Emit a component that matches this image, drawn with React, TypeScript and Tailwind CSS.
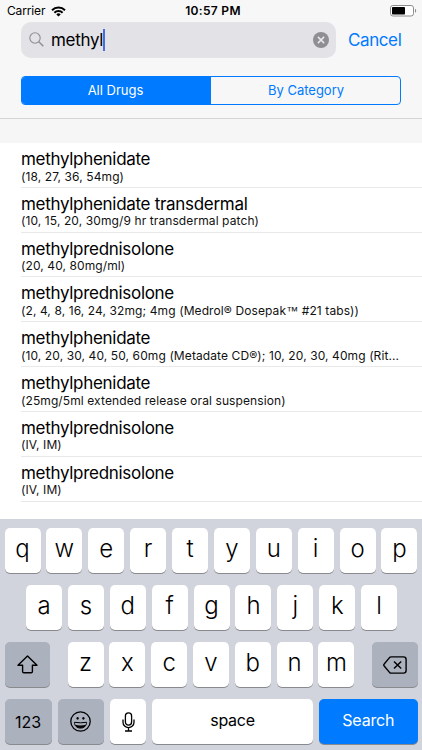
import React, { useState } from 'react';

interface Drug {
  id: number;
  name: string;
  detail: string;
}

const DRUGS: Drug[] = [
  { id: 1, name: 'methylphenidate', detail: '(18, 27, 36, 54mg)' },
  { id: 2, name: 'methylphenidate transdermal', detail: '(10, 15, 20, 30mg/9 hr transdermal patch)' },
  { id: 3, name: 'methylprednisolone', detail: '(20, 40, 80mg/ml)' },
  { id: 4, name: 'methylprednisolone', detail: '(2, 4, 8, 16, 24, 32mg; 4mg (Medrol® Dosepak™ #21 tabs))' },
  { id: 5, name: 'methylphenidate', detail: '(10, 20, 30, 40, 50, 60mg (Metadate CD®); 10, 20, 30, 40mg (Rit...' },
  { id: 6, name: 'methylphenidate', detail: '(25mg/5ml extended release oral suspension)' },
  { id: 7, name: 'methylprednisolone', detail: '(IV, IM)' },
  { id: 8, name: 'methylprednisolone', detail: '(IV, IM)' },
];

const TABS = ['All Drugs', 'By Category'];

const StatusBar: React.FC = () => (
  <div className="grid h-[22px] grid-cols-3 items-center pl-[7px] pr-[5px] text-[12px] text-black">
    <div className="flex items-center gap-[6px]">
      <span className="tracking-[-0.15px]">Carrier</span>
      <svg width="15" height="11" viewBox="0 0 15 11" fill="none" stroke="#000" strokeWidth="2">
        <path d="M1 4.2a9.2 9.2 0 0 1 13 0" />
        <path d="M3.4 6.8a5.8 5.8 0 0 1 8.2 0" />
        <path d="M7.5 10.6 5.3 8.4a3.1 3.1 0 0 1 4.4 0z" fill="#000" stroke="none" />
      </svg>
    </div>
    <span className="whitespace-nowrap pl-[2px] text-center font-semibold tracking-[0.3px]">10:57 PM</span>
    <svg className="justify-self-end" width="27" height="12" viewBox="0 0 27 12">
      <rect x="0.5" y="0.5" width="23" height="10.5" rx="2.4" fill="#fff" stroke="#8c8c8c" />
      <rect x="2" y="2" width="13" height="7.5" rx="0.8" fill="#000" />
      <path d="M25 3.8c1.6.5 1.6 3.4 0 3.9z" fill="#8c8c8c" />
    </svg>
  </div>
);

const SearchBar: React.FC = () => (
  <div className="flex h-9 items-center pl-[21px]">
    <div className="flex h-9 w-[315px] items-center rounded-[10px] bg-[#e2e2e7] pl-[8px] pr-[7px]">
      <svg className="mb-px" width="15" height="15" viewBox="0 0 15 15" fill="none" stroke="#8e8e93" strokeWidth="1.1">
        <circle cx="6" cy="6" r="5.2" />
        <path d="M9.8 9.8 14.3 14.3" strokeWidth="1.4" />
      </svg>
      <span className="ml-[7px] pt-[2px] text-[17px] tracking-[-0.3px] text-black">methyl</span>
      <span className="h-[22px] w-[2px] bg-[#4a6ae0]" />
      <svg className="ml-auto" width="16" height="16" viewBox="0 0 16 16">
        <circle cx="8" cy="8" r="8" fill="#8e8e93" />
        <path d="m4.9 4.9 6.2 6.2M11.1 4.9l-6.2 6.2" stroke="#e8e8ec" strokeWidth="1.5" />
      </svg>
    </div>
    <button className="ml-[12px] pt-[2px] text-[17px] tracking-[-0.4px] text-[#007aff]">Cancel</button>
  </div>
);

const DrugRow: React.FC<{ drug: Drug }> = ({ drug }) => (
  <li className="ml-[21px] h-[44.83px] border-b border-[#e9e9eb] pt-[6px]">
    <div className="whitespace-nowrap text-[17px] leading-[21px] tracking-[-0.3px] text-black">{drug.name}</div>
    <div className="-mt-[0.5px] whitespace-nowrap text-[12px] leading-[14px] tracking-[0.1px] text-[#111]">
      {drug.detail.split('™').map((part, i) => (
        <React.Fragment key={i}>
          {i > 0 && <span className="font-['Liberation_Sans']">™</span>}
          {part}
        </React.Fragment>
      ))}
    </div>
  </li>
);

const KEY = 'flex h-[45px] items-center justify-center rounded-[5px] shadow-[0_1px_0_#898a8d]';

const LetterKey: React.FC<{ letter: string }> = ({ letter }) => (
  <button className={`${KEY} w-[36px] bg-white pb-[3px] text-[24px] font-[360] text-black`}>{letter}</button>
);

const Keyboard: React.FC = () => (
  <div className="flex h-[231px] flex-col gap-[12px] bg-[#d1d4dc] px-[4.5px] pt-[9px] text-black">
    <div className="flex justify-between">
      {'qwertyuiop'.split('').map(l => <LetterKey key={l} letter={l} />)}
    </div>
    <div className="flex justify-between pl-[21.5px] pr-[20.3px]">
      {'asdfghjkl'.split('').map(l => <LetterKey key={l} letter={l} />)}
    </div>
    <div className="flex justify-between">
      <button className={`${KEY} w-[45.5px] bg-[#abb1bd]`}>
        <svg width="21" height="19" viewBox="0 0 21 19" fill="none" stroke="#000" strokeWidth="1.4" strokeLinejoin="round">
          <path d="M10.5 1 1 10.3h4.6v6.2q0 1.3 1.3 1.3h7.2q1.3 0 1.3-1.3v-6.2H20z" />
        </svg>
      </button>
      <div className="flex gap-[5.8px]">
        {'zxcvbnm'.split('').map(l => <LetterKey key={l} letter={l} />)}
      </div>
      <button className={`${KEY} w-[45.5px] bg-[#abb1bd]`}>
        <svg width="24" height="18" viewBox="0 0 24 18" fill="none" stroke="#000" strokeWidth="1.4" strokeLinejoin="round">
          <path d="M8.2.9h12.3q2.6 0 2.6 2.6v11q0 2.6-2.6 2.6H8.2q-1 0-1.7-.7L1.2 10q-.9-1 0-2l5.3-6.4Q7.2.9 8.2.9z" />
          <path d="m11 5.4 7.2 7.2M18.2 5.4 11 12.6" />
        </svg>
      </button>
    </div>
    <div className="flex gap-[6px]">
      <button className={`${KEY} w-[47px] bg-[#abb1bd] text-[16px]`}>123</button>
      <button className={`${KEY} w-[46.5px] bg-[#abb1bd]`}>
        <svg width="21" height="21" viewBox="0 0 21 21" fill="none" stroke="#000" strokeWidth="1.3">
          <circle cx="10.5" cy="10.5" r="9.7" />
          <ellipse cx="7.6" cy="7.3" rx="1.1" ry="1.4" fill="#000" stroke="none" />
          <ellipse cx="13.4" cy="7.3" rx="1.1" ry="1.4" fill="#000" stroke="none" />
          <path d="M4.4 11.3q6.1 1 12.2 0c0 3.5-2.7 5.8-6.1 5.8s-6.1-2.3-6.1-5.8z" strokeWidth="1" />
          <path d="M5 13.8q5.5 1.2 11 0c-.8 2.2-2.9 3.3-5.5 3.3S5.8 16 5 13.8z" fill="#000" stroke="none" />
        </svg>
      </button>
      <button className={`${KEY} w-[36px] bg-white`}>
        <svg width="13" height="20" viewBox="0 0 13 20" fill="none" stroke="#000" strokeWidth="1.3">
          <rect x="3.4" y="0.8" width="6.2" height="12.4" rx="3.1" />
          <path d="M1 7.5v2.8a5.5 5.3 0 0 0 11 0V7.5M6.5 15.6v3.3M3 19h7" />
        </svg>
      </button>
      <button className={`${KEY} w-[161px] bg-white pb-[3px] text-[16px] tracking-[-0.3px]`}>space</button>
      <button className={`${KEY} flex-1 bg-[#007aff] pb-[3px] text-[16px] tracking-[-0.2px] text-white`}>Search</button>
    </div>
  </div>
);

const App: React.FC = () => {
  const [activeTab, setActiveTab] = useState('All Drugs');

  return (
    <div className="flex h-[750px] w-[422px] flex-col overflow-hidden bg-white font-['Inter',sans-serif]">
      <header className="h-[119px] border-b border-[#d5d5d7] bg-[#f7f7f8]">
        <StatusBar />
        <SearchBar />
        <div className="mx-[21px] mt-[18px] flex h-[29px] overflow-hidden rounded-[4px] border border-[#007aff]">
          {TABS.map(tab => (
            <button
              key={tab}
              onClick={() => setActiveTab(tab)}
              className={`w-1/2 text-[13px] ${
                activeTab === tab ? 'bg-[#007aff] pr-[2px] text-white' : 'pl-px text-[#007aff]'
              }`}
            >
              {tab}
            </button>
          ))}
        </div>
      </header>
      <div className="h-6 bg-[#f6f6f6]" />
      <ul className="h-[376px]">
        {DRUGS.map(drug => <DrugRow key={drug.id} drug={drug} />)}
      </ul>
      <Keyboard />
    </div>
  );
};

export default App;
